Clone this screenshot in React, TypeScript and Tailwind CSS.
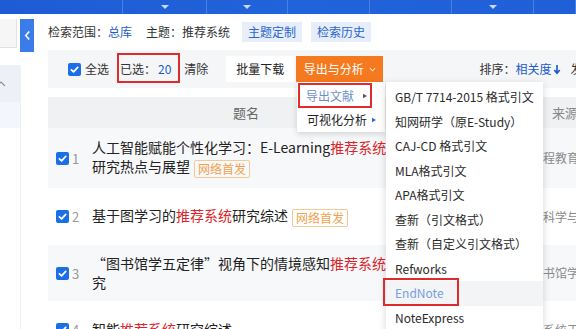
import React from "react";

const navSegments = [
  { w: 123, arrow: false },
  { w: 84, arrow: true },
  { w: 81, arrow: true },
  { w: 82, arrow: false },
  { w: 82, arrow: false },
  { w: 82, arrow: true },
  { w: 42, arrow: false },
];

const exportFormats = [
  "GB/T 7714-2015 格式引文",
  "知网研学（原E-Study）",
  "CAJ-CD 格式引文",
  "MLA格式引文",
  "APA格式引文",
  "查新（引文格式）",
  "查新（自定义引文格式）",
  "Refworks",
  "EndNote",
  "NoteExpress",
];

function Check() {
  return (
    <span className="flex h-[13px] w-[13px] shrink-0 items-center justify-center rounded-[2px] bg-[#1a6fe6]">
      <svg viewBox="0 0 12 12" className="h-[11px] w-[11px]">
        <path
          d="M2.6 6.3 5 8.6 9.5 3.6"
          fill="none"
          stroke="white"
          strokeWidth="1.9"
          strokeLinecap="round"
          strokeLinejoin="round"
        />
      </svg>
    </span>
  );
}

function Tag() {
  return (
    <span className="ml-[4px] inline-flex h-[18px] items-center rounded-[2px] border border-[#f3c994] px-[3px] align-middle text-[12px] leading-none text-[#f0a24e]">
      网络首发
    </span>
  );
}

function Hl({ children }: { children: React.ReactNode }) {
  return <span className="text-[#d9262c]">{children}</span>;
}

function Caret({ className }: { className: string }) {
  return (
    <svg viewBox="0 0 6 6" className={className}>
      <path d="M1 0.8 5 3 1 5.2Z" />
    </svg>
  );
}

function Row({
  n,
  h,
  bg,
  source,
  children,
}: {
  n: number;
  h: string;
  bg: string;
  source: string;
  children: React.ReactNode;
}) {
  return (
    <div className={`flex items-center ${h} ${bg}`}>
      <div className="flex w-[44px] shrink-0 items-center pl-[8px]">
        <Check />
        <span className="ml-[3px] text-[13px] leading-none text-[#999]">{n}</span>
      </div>
      <div className="w-[308px] shrink-0 whitespace-nowrap text-[14px] leading-[19px] text-[#222]">
        {children}
      </div>
      <div className="ml-[143px] shrink-0 whitespace-nowrap text-[12px] text-[#8a8a8a]">{source}</div>
    </div>
  );
}

export default function App() {
  return (
    <div className="relative h-[329px] w-[576px] overflow-hidden bg-white font-['Noto_Sans_CJK_SC','Noto_Sans',sans-serif] text-[#333]">
      {/* top navigation strip */}
      <div className="flex h-[14px] bg-gradient-to-r from-[#1d5cd4] via-[#2163da] to-[#1f60d8]">
        {navSegments.map((s, i) => (
          <div
            key={i}
            style={{ width: s.w }}
            className="flex shrink-0 items-center justify-center border-r border-[#4a80e3]"
          >
            {s.arrow && (
              <svg viewBox="0 0 8 4" className="h-[4px] w-[8px]">
                <path d="M0 0h8L4 4Z" fill="#c9d9f7" />
              </svg>
            )}
          </div>
        ))}
      </div>

      <div className="flex">
        {/* left rail */}
        <div className="relative flex h-[315px] w-[48px] shrink-0 flex-col">
          <div className="mt-[5px] h-[29px] w-[17px] border-b border-r border-[#e2e2e2] bg-[#f6f6f6]" />
          <div className="absolute left-[20px] top-[5px] flex h-[33px] w-[14px] items-center justify-center bg-[#3a7ce8]">
            <svg viewBox="0 0 8 12" className="h-[11px] w-[7px]">
              <path d="M6 1.5 2 6l4 4.5" fill="none" stroke="white" strokeWidth="1.8" />
            </svg>
          </div>
          <div className="mt-[17px] flex w-[21px] flex-1 flex-col border-r border-[#edf0f4]">
            <div className="flex h-[37px] items-center bg-[#edf1f7]">
              <svg viewBox="0 0 8 6" className="h-[6px] w-[8px]">
                <path d="M-3 5 1 1 5 5" fill="none" stroke="#8a8f99" strokeWidth="1.1" />
              </svg>
            </div>
            <div className="h-[26px] bg-[#f3f6fc]" />
          </div>
        </div>

        {/* content */}
        <div className="w-[528px] shrink-0 overflow-hidden">
          <div className="flex h-[36px] items-center whitespace-nowrap text-[12px]">
            <span className="shrink-0">检索范围：</span>
            <span className="shrink-0 text-[#1a5cc8]">总库</span>
            <span className="ml-[14px] shrink-0">主题：推荐系统</span>
            <span className="ml-[12px] flex h-[20px] w-[60px] shrink-0 items-center justify-center bg-[#e7eefa] text-[#2a66cf]">
              主题定制
            </span>
            <span className="ml-[9px] flex h-[20px] w-[60px] shrink-0 items-center justify-center bg-[#e7eefa] text-[#2a66cf]">
              检索历史
            </span>
          </div>

          <div className="flex h-[38px] items-center overflow-hidden whitespace-nowrap bg-[#f5f6f8] pl-[20px] text-[12px]">
            <Check />
            <span className="ml-[4px] shrink-0">全选</span>
            <span className="ml-[11px] shrink-0">已选：</span>
            <span className="ml-[2px] shrink-0 text-[#1a5cc8]">20</span>
            <span className="ml-[13px] shrink-0">清除</span>
            <span className="ml-[18px] flex h-[26px] w-[68px] shrink-0 items-center justify-center bg-white text-[#222]">
              批量下载
            </span>
            <span className="ml-[2px] flex h-[26px] w-[87px] shrink-0 items-center justify-center gap-[5px] bg-[#f57a1f] text-white">
              导出与分析
              <svg viewBox="0 0 8 5" className="h-[5px] w-[7px]">
                <path d="M1 1 4 4 7 1" fill="none" stroke="#ffe2c8" strokeWidth="1.2" />
              </svg>
            </span>
            <span className="ml-[96px] shrink-0">排序：</span>
            <span className="shrink-0 text-[#1a5cc8]">相关度</span>
            <svg viewBox="0 0 8 12" className="ml-[2px] h-[11px] w-[8px] shrink-0">
              <path d="M4 1v8M1 6.5 4 10 7 6.5" fill="none" stroke="#1a5cc8" strokeWidth="1.8" />
            </svg>
            <span className="ml-[9px] shrink-0">发表时间</span>
          </div>

          <div className="mt-[9px] flex h-[31px] items-center whitespace-nowrap bg-[#f0f1f3] text-[13px] text-[#666]">
            <div className="w-[44px] shrink-0" />
            <div className="w-[308px] shrink-0 text-center">题名</div>
            <div className="ml-[152px] shrink-0 text-[#888]">来源</div>
          </div>

          <Row n={1} h="h-[60px]" bg="bg-[#f7f8fa]" source="程教育研究">
            人工智能赋能个性化学习：E-Learning<Hl>推荐系统</Hl>
            <br />
            研究热点与展望
            <Tag />
          </Row>
          <Row n={2} h="h-[57px]" bg="bg-white" source="科学与探索">
            基于图学习的<Hl>推荐系统</Hl>研究综述
            <Tag />
          </Row>
          <Row n={3} h="h-[56px]" bg="bg-[#f7f8fa]" source="书馆学刊">
            “图书馆学五定律”视角下的情境感知<Hl>推荐系统</Hl>研
            <br />
            究
          </Row>
          <Row n={4} h="h-[57px]" bg="bg-white" source="系统工程">
            智能<Hl>推荐系统</Hl>研究综述
          </Row>
        </div>
      </div>

      {/* export dropdown */}
      <div className="absolute left-[297px] top-[82px] h-[50px] w-[88px] bg-white pt-[2px] text-[12px] shadow-[0_2px_6px_rgba(0,0,0,0.15)]">
        <div className="flex h-[24px] items-center pl-[9px] text-[#6f90c9]">
          导出文献
          <Caret className="ml-[8px] h-[6px] w-[6px] fill-[#556]" />
        </div>
        <div className="flex h-[24px] items-center pl-[10px] text-[#222]">
          可视化分析
          <Caret className="ml-[4px] h-[6px] w-[6px] fill-[#2a6ad6]" />
        </div>
      </div>

      {/* export format submenu */}
      <div className="absolute left-[386px] top-[82px] h-[260px] w-[157px] bg-white pt-[3px] text-[12px] text-[#2a2a2a] shadow-[0_2px_8px_rgba(0,0,0,0.16)]">
        {exportFormats.map((f) => (
          <div
            key={f}
            className={`flex h-[24.5px] items-center whitespace-nowrap pl-[9px] ${
              f === "EndNote" ? "bg-[#f3f4f6] text-[#78a1dc]" : ""
            }`}
          >
            {f}
          </div>
        ))}
      </div>

      {/* red annotation boxes */}
      <div className="absolute left-[117px] top-[53px] h-[30px] w-[63px] border-2 border-[#df2a2e]" />
      <div className="absolute left-[298px] top-[83px] h-[25px] w-[74px] border-2 border-[#df2a2e]" />
      <div className="absolute left-[383px] top-[278px] h-[28px] w-[76px] border-2 border-[#df2a2e]" />
    </div>
  );
}
